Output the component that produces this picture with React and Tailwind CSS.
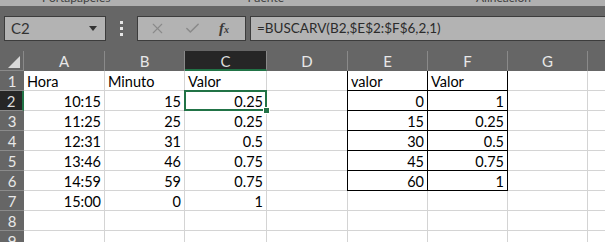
import { X, Check } from "lucide-react";

const cols = ["A", "B", "C", "D", "E", "F", "G"];

const rows = [
  ["Hora", "Minuto", "Valor", "", "valor", "Valor", ""],
  ["10:15", "15", "0.25", "", "0", "1", ""],
  ["11:25", "25", "0.25", "", "15", "0.25", ""],
  ["12:31", "31", "0.5", "", "30", "0.5", ""],
  ["13:46", "46", "0.75", "", "45", "0.75", ""],
  ["14:59", "59", "0.75", "", "60", "1", ""],
  ["15:00", "0", "1", "", "", "", ""],
  ["", "", "", "", "", "", ""],
  ["", "", "", "", "", "", ""],
];

const gridCols = "grid-cols-[24px_81px_80px_82px_81px_80px_80px_80px_17px]";

const Cell = ({ value, r, c }) => {
  const isText = r === 0;
  const inTable = (c === 4 || c === 5) && r <= 5;
  const selected = r === 1 && c === 2;
  return (
    <div
      className={`relative h-5 border-b border-r border-[#d4d4d4] px-[3px] leading-[21px] text-[14.5px] text-black whitespace-nowrap ${
        isText ? "text-left" : "text-right"
      } ${inTable ? "border-l border-l-black border-r-black border-b-black -ml-px" : ""} ${
        selected ? "z-10" : ""
      }`}
    >
      {value}
      {selected && (
        <>
          <div className="absolute -left-px -top-px right-[-1px] bottom-[-1px] border-2 border-[#217346]" />
          <div className="absolute right-[-4px] bottom-[-4px] h-[7px] w-[7px] bg-[#217346] border border-white" />
        </>
      )}
    </div>
  );
};

const App = () => {
  return (
    <div className="w-[605px] h-[242px] overflow-hidden bg-white font-['Lato','Liberation_Sans',sans-serif]">
      {/* ribbon leftovers */}
      <div className="relative h-[6px] overflow-hidden bg-[#b0b0b0] text-[12px] leading-[14px] text-[#404040]">
        <div className="flex -mt-[9px]">
          <span className="ml-[42px]">Portapapeles</span>
          <span className="ml-[50px]">⌐</span>
          <span className="ml-[80px]">Fuente</span>
          <span className="ml-[80px]">⌐</span>
          <span className="ml-[105px]">Alineación</span>
        </div>
      </div>

      {/* formula bar */}
      <div className="flex h-[45px] items-start bg-[#666666] pt-[10px]">
        <div className="ml-[4px] flex h-[25px] w-[102px] items-center justify-between border border-[#3c3c3c] bg-[#b3b3b3] pl-[6px] pr-[8px] text-[15px] text-[#333]">
          <span>C2</span>
          <span className="h-0 w-0 border-x-[4px] border-t-[5px] border-x-transparent border-t-[#333]" />
        </div>
        <div className="ml-[14px] mt-[5px] flex flex-col gap-[3px]">
          <span className="h-[3px] w-[3px] bg-[#e6e6e6]" />
          <span className="h-[3px] w-[3px] bg-[#e6e6e6]" />
          <span className="h-[3px] w-[3px] bg-[#e6e6e6]" />
        </div>
        <div className="ml-[14px] flex h-[25px] w-[109px] items-center border border-[#3c3c3c] bg-[#b3b3b3]">
          <X size={17} strokeWidth={1.6} className="ml-[11px] text-[#8a8a8a]" />
          <Check size={17} strokeWidth={2.2} className="ml-[18px] text-[#8a8a8a]" />
          <span className="ml-[18px] font-['Liberation_Serif',serif] text-[15px] italic font-bold text-[#3a3a3a]">
            f<span className="text-[10px]">x</span>
          </span>
        </div>
        <div className="ml-[4px] flex h-[25px] flex-1 items-center border border-r-0 border-[#3c3c3c] bg-[#b3b3b3] pl-[6px] text-[13.5px] text-[#2b2b2b]">
          =BUSCARV(B2,$E$2:$F$6,2,1)
        </div>
      </div>

      {/* grid */}
      <div className={`grid ${gridCols}`}>
        <div className="relative h-5 border-r border-b border-[#8a8a8a] bg-[#666666]">
          <svg className="absolute bottom-[2px] right-[3px]" width="12" height="12">
            <polygon points="12,0 12,12 0,12" fill="#d9d9d9" />
          </svg>
        </div>
        {cols.map((c) => (
          <div
            key={c}
            className={`h-5 border-r text-center text-[15px] leading-[20px] ${
              c === "C"
                ? "bg-[#262626] text-[#dcdcdc] border-b-2 border-b-[#217346] border-r-[#8a8a8a]"
                : "bg-[#666666] text-[#e8e8e8] border-[#8a8a8a]"
            }`}
          >
            {c}
          </div>
        ))}
        <div className="h-5 bg-[#666666]" />

        {rows.map((row, r) => (
          <div key={r} className="contents">
            <div
              className={`h-5 border-b text-center text-[15px] leading-[20px] ${
                r === 1
                  ? "bg-[#262626] text-[#dcdcdc] border-r-2 border-r-[#217346] border-b-[#8a8a8a]"
                  : "bg-[#666666] text-[#e8e8e8] border-[#8a8a8a]"
              }`}
            >
              {r + 1}
            </div>
            {row.map((v, c) => (
              <Cell key={c} value={v} r={r} c={c} />
            ))}
            <div className="h-5 border-b border-[#d4d4d4]" />
          </div>
        ))}
      </div>
    </div>
  );
};

export default App;
